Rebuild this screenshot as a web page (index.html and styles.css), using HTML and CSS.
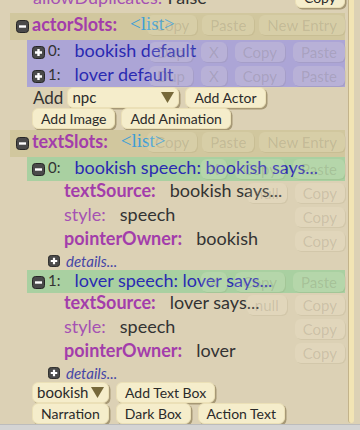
FILE: index.html
```html
<!DOCTYPE html>
<html lang="en">
<head>
  <meta charset="UTF-8">
  <meta name="viewport" content="width=device-width, initial-scale=1.0">
  <title>Slot Inspector</title>
  <link rel="stylesheet" href="styles.css">
</head>
<body>
  <div class="window">
    <div class="inspector">

      <div class="top-prop">
        <span class="key">allowDuplicates:</span>
        <span class="val short">False</span>
        <button class="btn copy-top">Copy</button>
      </div>

      <!-- actor slots -->
      <div class="group-head">
        <svg class="toggle" viewBox="0 0 13 13"><rect x="0.5" y="0.5" width="12" height="12" rx="3" /><path d="M3 6.5h7" /></svg>
        <span class="key strong">actorSlots:</span>
        <span class="type">&lt;list&gt;</span>
        <div class="ghosts">
          <span class="ghost">Copy</span><span class="ghost">Paste</span><span class="ghost">New Entry</span>
        </div>
      </div>
      <div class="entries actors">
        <div class="entry">
          <svg class="toggle" viewBox="0 0 13 13"><rect x="0.5" y="0.5" width="12" height="12" rx="3" /><path d="M3 6.5h7M6.5 3v7" /></svg>
          <span class="idx">0:</span><span class="name">bookish default</span>
          <div class="ghosts"><span class="ghost">Dup</span><span class="ghost">X</span><span class="ghost">Copy</span><span class="ghost">Paste</span></div>
        </div>
        <div class="entry">
          <svg class="toggle" viewBox="0 0 13 13"><rect x="0.5" y="0.5" width="12" height="12" rx="3" /><path d="M3 6.5h7M6.5 3v7" /></svg>
          <span class="idx">1:</span><span class="name">lover default</span>
          <div class="ghosts"><span class="ghost">Dup</span><span class="ghost">X</span><span class="ghost">Copy</span><span class="ghost">Paste</span></div>
        </div>
      </div>
      <div class="actions">
        <span class="add-label">Add</span>
        <div class="btn select npc">npc <svg class="caret" viewBox="0 0 13 11"><path d="M0 0h13L6.5 11z" /></svg></div>
        <button class="btn">Add Actor</button>
      </div>
      <div class="actions">
        <button class="btn">Add Image</button>
        <button class="btn">Add Animation</button>
      </div>

      <!-- text slots -->
      <div class="group-head">
        <svg class="toggle" viewBox="0 0 13 13"><rect x="0.5" y="0.5" width="12" height="12" rx="3" /><path d="M3 6.5h7" /></svg>
        <span class="key strong">textSlots:</span>
        <span class="type">&lt;list&gt;</span>
        <div class="ghosts">
          <span class="ghost">Copy</span><span class="ghost">Paste</span><span class="ghost">New Entry</span>
        </div>
      </div>

      <div class="entries texts">
        <div class="entry">
          <svg class="toggle" viewBox="0 0 13 13"><rect x="0.5" y="0.5" width="12" height="12" rx="3" /><path d="M3 6.5h7" /></svg>
          <span class="idx">0:</span><span class="name">bookish speech: bookish says...</span>
          <div class="ghosts"><span class="ghost">X</span><span class="ghost">Copy</span><span class="ghost">Paste</span></div>
        </div>
      </div>
      <div class="field">
        <span class="key strong">textSource:</span><span class="val">bookish says...</span>
        <div class="ghosts"><span class="ghost">null</span><span class="ghost">Copy</span></div>
      </div>
      <div class="field">
        <span class="key">style:</span><span class="val">speech</span>
        <div class="ghosts"><span class="ghost">Copy</span></div>
      </div>
      <div class="field">
        <span class="key strong">pointerOwner:</span><span class="val">bookish</span>
        <div class="ghosts"><span class="ghost">Copy</span></div>
      </div>
      <div class="details">
        <svg class="toggle small" viewBox="0 0 13 13"><rect x="0.5" y="0.5" width="12" height="12" rx="3" /><path d="M3 6.5h7M6.5 3v7" /></svg>
        <span>details...</span>
      </div>

      <div class="entries texts">
        <div class="entry">
          <svg class="toggle" viewBox="0 0 13 13"><rect x="0.5" y="0.5" width="12" height="12" rx="3" /><path d="M3 6.5h7" /></svg>
          <span class="idx">1:</span><span class="name">lover speech: lover says...</span>
          <div class="ghosts"><span class="ghost">X</span><span class="ghost">Copy</span><span class="ghost">Paste</span></div>
        </div>
      </div>
      <div class="field">
        <span class="key strong">textSource:</span><span class="val">lover says...</span>
        <div class="ghosts"><span class="ghost">null</span><span class="ghost">Copy</span></div>
      </div>
      <div class="field">
        <span class="key">style:</span><span class="val">speech</span>
        <div class="ghosts"><span class="ghost">Copy</span></div>
      </div>
      <div class="field">
        <span class="key strong">pointerOwner:</span><span class="val">lover</span>
        <div class="ghosts"><span class="ghost">Copy</span></div>
      </div>
      <div class="details">
        <svg class="toggle small" viewBox="0 0 13 13"><rect x="0.5" y="0.5" width="12" height="12" rx="3" /><path d="M3 6.5h7M6.5 3v7" /></svg>
        <span>details...</span>
      </div>

      <div class="actions tight">
        <div class="btn select owner">bookish <svg class="caret" viewBox="0 0 13 11"><path d="M0 0h13L6.5 11z" /></svg></div>
        <button class="btn">Add Text Box</button>
      </div>
      <div class="actions tight">
        <button class="btn">Narration</button>
        <button class="btn">Dark Box</button>
        <button class="btn">Action Text</button>
      </div>
    </div>
    <div class="rail"></div>
  </div>
  <div class="status"></div>
</body>
</html>
```

FILE: styles.css
```css
body {
  margin: 0;
  height: 430px;
  overflow: hidden;
  display: flex;
  flex-direction: column;
  background: #dcd1b5;
  font-family: Lato, "Open Sans", sans-serif;
  color: #333;
}

.window {
  display: flex;
  height: 424px;
  flex: none;
}

.inspector {
  box-sizing: border-box;
  width: 345px;
  padding-left: 10px;
  flex: none;
}

.rail {
  width: 5px;
  margin-left: 3px;
  margin-bottom: 1px;
  background: #f2e4b4;
  border-left: 1px solid #c3b38a;
  border-radius: 0 0 3px 3px;
}

.status {
  flex: 1;
  background: #d4d4d4;
  border-top: 1px solid #bcbcbc;
}

/* text bits */
.key {
  font-size: 18px;
  color: #a552b3;
  white-space: nowrap;
}

.key.strong {
  font-weight: bold;
  color: #a33dab;
}

.val {
  font-size: 18px;
  color: #333;
  margin-left: 14px;
  white-space: nowrap;
}

.val.short {
  margin-left: 5px;
}

.type {
  font-family: "Liberation Serif", serif;
  font-size: 19px;
  color: #3c9ed6;
  margin-left: 13px;
}

.idx {
  font-size: 15px;
  color: #333;
  margin-left: 3px;
  margin-right: 14px;
}

.name {
  font-size: 18px;
  color: #2a2ab2;
  white-space: nowrap;
}

/* toggles */
.toggle {
  display: block;
  width: 13px;
  height: 13px;
  flex: none;
  margin-top: 7px;
}

.group-head .toggle {
  margin-right: 3px;
}

.toggle rect {
  fill: #4a4a4a;
  stroke: #262626;
}

.toggle path {
  stroke: #fff;
  stroke-width: 2.4;
}

/* rows */
.top-prop {
  display: flex;
  align-items: center;
  height: 22px;
  margin: -14px 0 5px 23px;
  line-height: 22px;
}

.copy-top {
  margin-left: auto;
}

.group-head {
  position: relative;
  display: flex;
  align-items: flex-start;
  height: 27px;
  padding-left: 6px;
  line-height: 22px;
  background: #d1c79e;
}

.entries {
  margin-left: 17px;
}

.actors {
  background: #aca5d6;
}

.texts {
  background: #a9d0a1;
}

.entry {
  position: relative;
  display: flex;
  align-items: flex-start;
  height: 23.5px;
  padding-left: 5px;
  line-height: 20px;
}

.entry .toggle {
  margin-top: 6px;
}

.field {
  position: relative;
  display: flex;
  align-items: flex-start;
  height: 24px;
  padding-left: 54px;
  line-height: 18px;
}

.details {
  display: flex;
  align-items: flex-start;
  height: 17px;
  padding-left: 38px;
  font-size: 15px;
  font-style: italic;
  color: #4646a6;
  line-height: 16px;
}

.details .toggle {
  width: 12px;
  height: 12px;
  margin-top: 2px;
  margin-right: 6px;
}

.actions {
  display: flex;
  align-items: center;
  gap: 6px;
  height: 21px;
  padding-left: 22px;
}

.actions + .actions {
  margin-bottom: 1px;
}

.actions.tight {
  margin: 0;
  gap: 7px;
}

.add-label {
  font-size: 17px;
  margin: 0 -2px 0 1px;
}

/* buttons */
.btn {
  box-sizing: border-box;
  height: 21px;
  padding: 0 8px;
  font-family: inherit;
  font-size: 14px;
  line-height: 19px;
  color: #2a2a2a;
  background: #f5edcb;
  border: 1px solid #ebe0b7;
  border-radius: 6px;
  box-shadow: 1.5px 1.5px 0 #a69875;
  white-space: nowrap;
}

.select {
  display: flex;
  align-items: center;
  justify-content: space-between;
  padding: 0 4px;
  font-size: 15px;
}

.npc {
  width: 112px;
}

.owner {
  width: 77px;
}

.caret {
  width: 13px;
  height: 11px;
}

.caret path {
  fill: #76683a;
}

/* faded buttons behind the rows */
.ghosts {
  position: absolute;
  top: 2px;
  right: 0;
  display: flex;
  gap: 8px;
}

.group-head .ghosts {
  gap: 5px;
}

.ghost {
  height: 20px;
  padding: 0 8px;
  font-size: 15px;
  font-style: normal;
  font-weight: normal;
  line-height: 20px;
  color: rgba(70, 60, 40, 0.15);
  background: rgba(255, 248, 220, 0.15);
  border-radius: 6px;
  box-shadow: 1px 1px 0 rgba(90, 70, 30, 0.07);
}
```
